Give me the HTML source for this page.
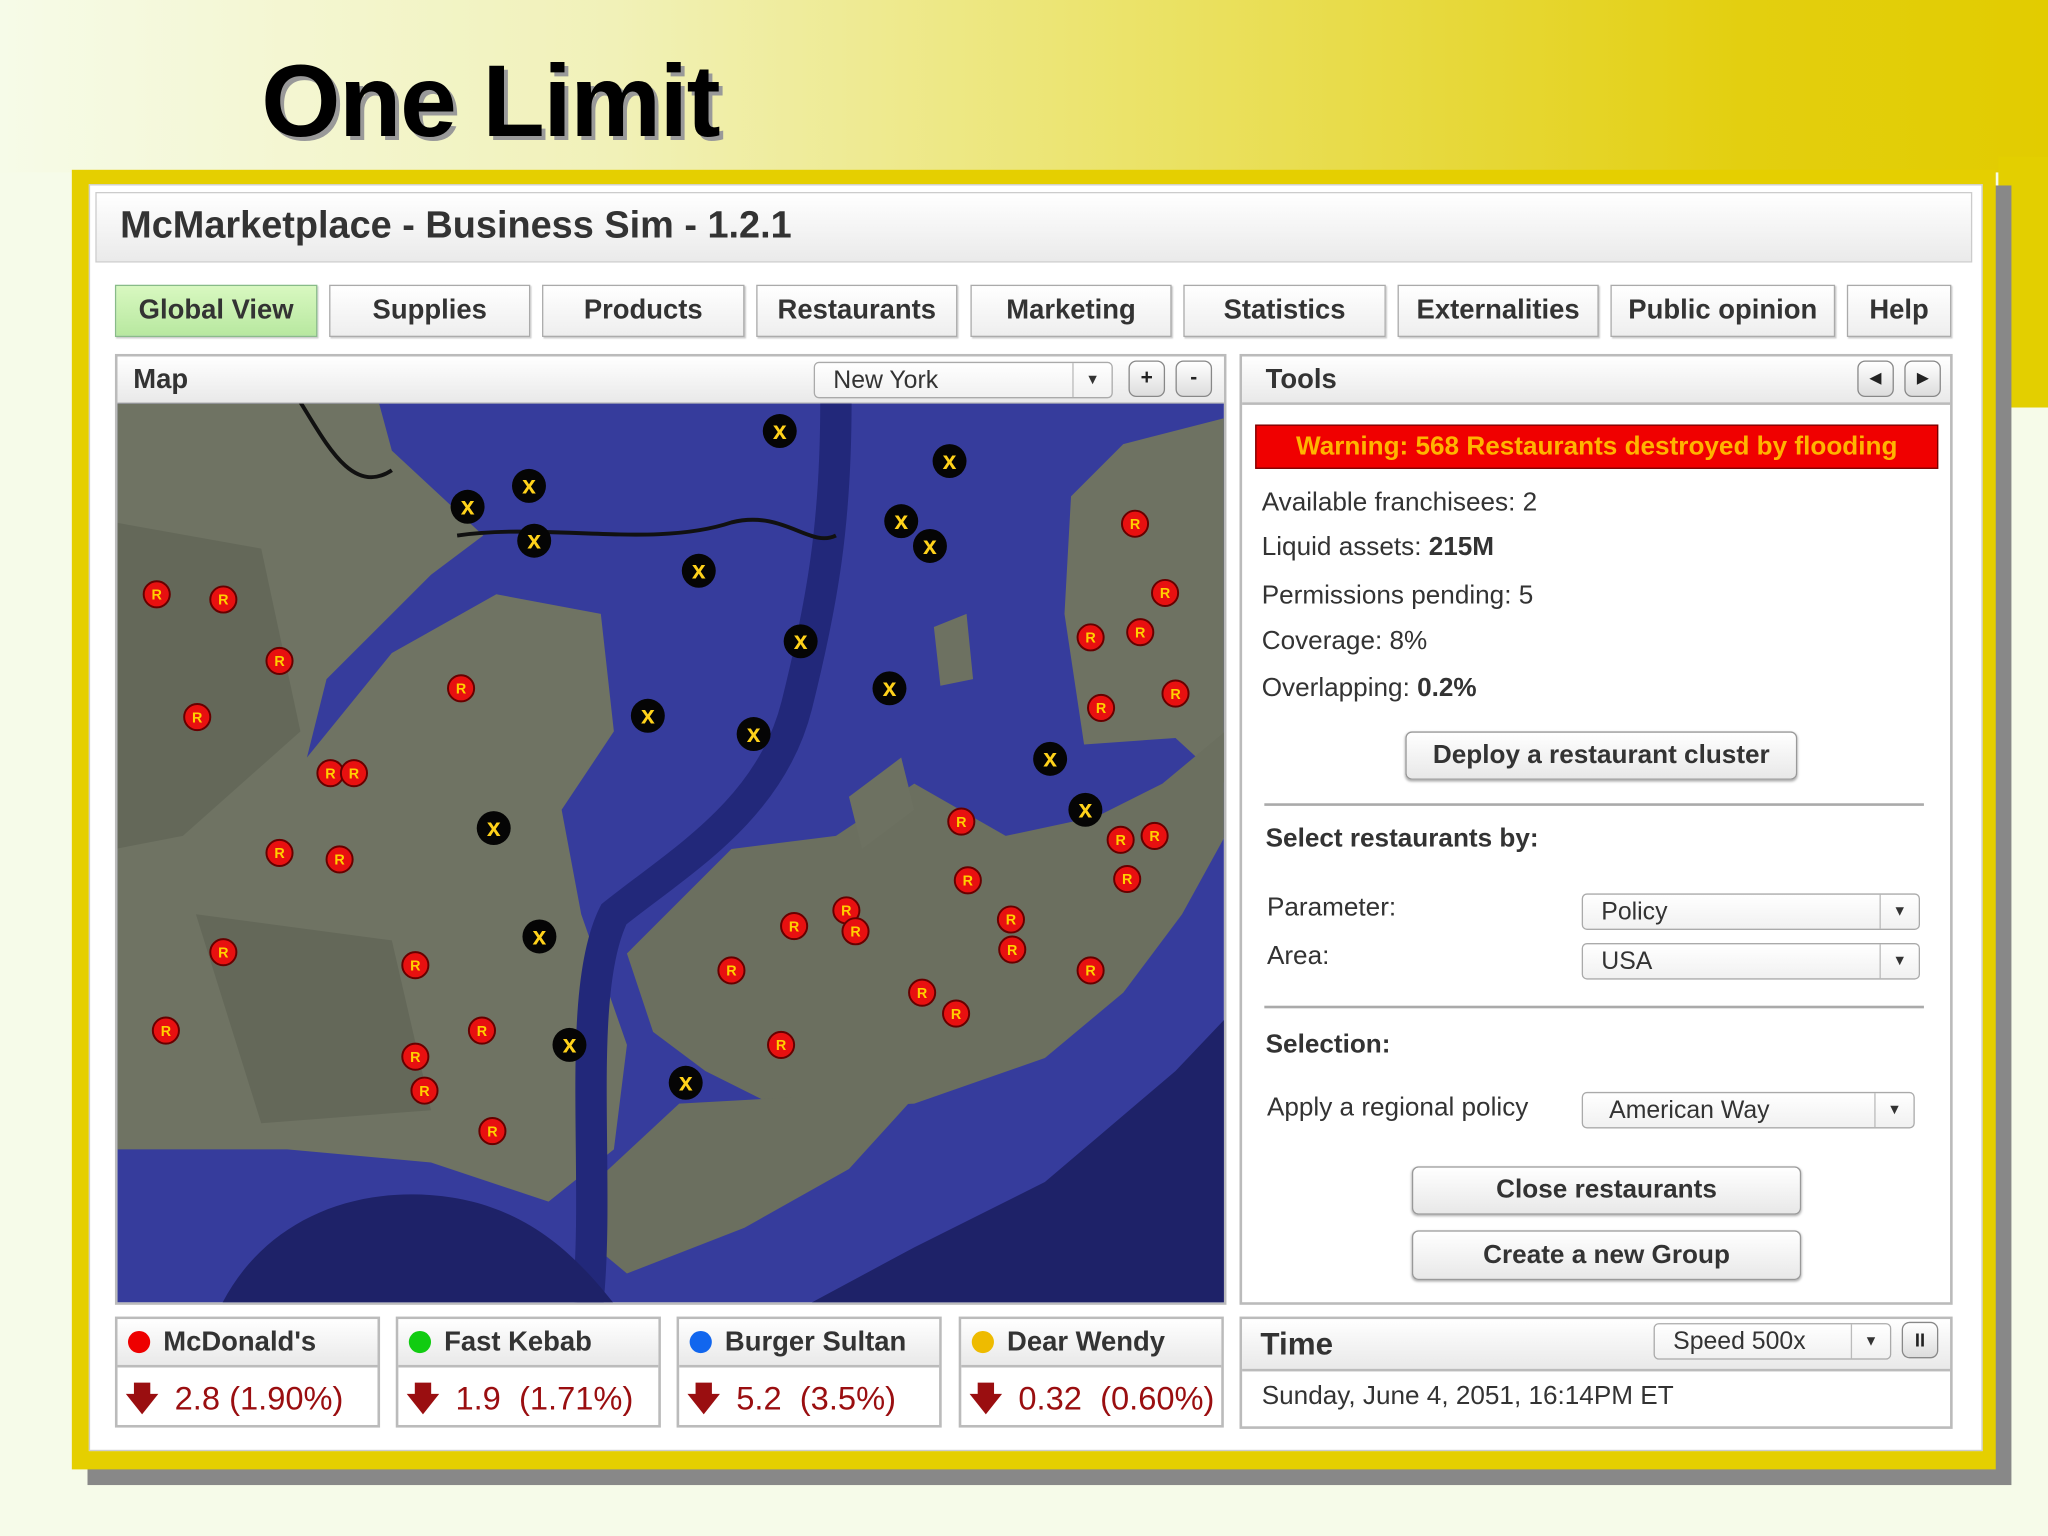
<!DOCTYPE html>
<html><head><meta charset="utf-8"><style>
*{margin:0;padding:0;box-sizing:border-box}
html,body{width:2048px;height:1536px;overflow:hidden;background:#f6fbe9;font-family:"Liberation Sans",Arial,sans-serif}
#root{position:absolute;left:0;top:0;width:1568px;height:1176px;transform:scale(1.306122);transform-origin:0 0}
.a{position:absolute}
.tab{position:absolute;top:218px;height:40px;border:1px solid #aaa;background:linear-gradient(#fff,#eee);font-weight:bold;font-size:21px;color:#333;text-align:center;line-height:38px;box-shadow:1px 1px 1px #ccc}
.panel{position:absolute;border:2px solid #bbb;background:#fff}
.ph{position:absolute;left:0;right:0;top:0;height:37px;background:linear-gradient(#fff,#e9e9e9);border-bottom:2px solid #bbb;font-weight:bold;font-size:21px;color:#333;line-height:36px;padding-left:12px}
.sel{position:absolute;border:1px solid #aaa;border-radius:4px;background:linear-gradient(#fff,#f1f1f1);font-size:19px;color:#333;line-height:28px;padding-left:14px}
.sel .ar{position:absolute;right:0;top:0;bottom:0;width:30px;border-left:1px solid #bbb;text-align:center;font-size:11px;line-height:26px;color:#333}
.btn{position:absolute;border:1px solid #999;border-radius:5px;background:linear-gradient(#fff,#e8e8e8);font-weight:bold;font-size:20px;color:#333;text-align:center;box-shadow:0 1px 2px #aaa}
.sb{position:absolute;border:1px solid #888;border-radius:6px;background:linear-gradient(#fff,#ddd);width:28px;height:28px;text-align:center;font-size:16px;font-weight:bold;line-height:26px;color:#222}
.t{position:absolute;font-size:20px;color:#333;white-space:nowrap}
.stat{position:absolute;top:1008px;height:85px;border:2px solid #bbb;background:#fff}
.stat .h{height:37px;background:linear-gradient(#fff,#e9e9e9);border-bottom:2px solid #bbb;font-weight:bold;font-size:21px;color:#333;line-height:36px;padding-left:8px;white-space:nowrap}
.dot{display:inline-block;width:17px;height:17px;border-radius:50%;vertical-align:-2px;margin-right:10px}
.stat .v{font-size:25px;color:#9a0e10;line-height:48px;padding-left:6px;white-space:nowrap}
.arr{display:inline-block;font-weight:bold;margin-right:12px}
</style></head><body><div id="root">
<div class="a" style="left:0;top:0;width:1568px;height:132px;background:linear-gradient(90deg,#f6fbe8 0%,#f1f1b8 30%,#ebe36a 55%,#e3cf10 85%,#e2cc00 100%)"></div>
<div class="a" style="left:1530px;top:120px;width:38px;height:192px;background:#e3cf00"></div>
<div class="a" style="left:200px;top:32px;font-size:78px;font-weight:bold;color:#000;text-shadow:3px 3px 0 #999;letter-spacing:-1px">One Limit</div>
<div class="a" style="left:67px;top:142px;width:1473px;height:995px;background:#888"></div>
<div class="a" style="left:55px;top:130px;width:1473px;height:995px;background:#e5cf00"></div>
<div class="a" style="left:68px;top:141px;width:1450px;height:970px;background:#fff;border:1px solid #ccc"></div>
<div class="a" style="left:73px;top:147px;width:1437px;height:54px;background:linear-gradient(#fff,#eaeaea);border:1px solid #ccc;font-weight:bold;font-size:29px;color:#333;line-height:50px;padding-left:18px">McMarketplace - Business Sim - 1.2.1</div>
<div class="tab" style="left:88px;width:155px;background:linear-gradient(#d8f8c0,#b8e8a0);border-color:#8b8">Global View</div>
<div class="tab" style="left:252px;width:154px">Supplies</div>
<div class="tab" style="left:415px;width:155px">Products</div>
<div class="tab" style="left:579px;width:154px">Restaurants</div>
<div class="tab" style="left:743px;width:154px">Marketing</div>
<div class="tab" style="left:906px;width:155px">Statistics</div>
<div class="tab" style="left:1070px;width:154px">Externalities</div>
<div class="tab" style="left:1233px;width:172px">Public opinion</div>
<div class="tab" style="left:1414px;width:80px">Help</div>

<div class="panel" style="left:88px;top:271px;width:851px;height:728px">
<div class="ph">Map</div>
</div>
<div class="sel" style="left:623px;top:277px;width:229px;height:28px">New York<div class="ar">▼</div></div>
<div class="sb" style="left:864px;top:276px">+</div>
<div class="sb" style="left:900px;top:276px">-</div>
<svg class="a" style="left:90px;top:309px" width="847" height="688" viewBox="90 309 847 688" preserveAspectRatio="none">
<rect x="88" y="308" width="852" height="692" fill="#363c9c"/>
<path d="M88 308 L290 308 L300 345 L370 410 L330 440 L250 520 L235 580 L300 500 L380 455 L460 470 L470 560 L430 620 L445 700 L480 800 L470 880 L420 920 L330 890 L220 880 L88 880Z" fill="#6f7363"/>
<path d="M88 400 L200 420 L230 560 L140 640 L88 650Z M150 700 L300 720 L330 850 L200 860 Z" fill="#5f6456" opacity=".7"/>
<path d="M820 380 L860 340 L938 320 L938 600 L900 565 L830 570 L815 470Z" fill="#6e7262"/>
<path d="M480 730 L560 650 L640 640 L700 600 L770 640 L840 625 L890 600 L938 560 L938 640 L905 700 L860 760 L800 810 L700 845 L600 850 L540 820 L500 790Z" fill="#6b6f5f"/>
<path d="M450 910 L520 845 L610 840 L700 840 L650 895 L570 940 L480 975 L450 950Z" fill="#6b6f5f"/>
<path d="M650 610 L690 580 L700 620 L660 650Z M715 480 L740 470 L745 520 L720 525Z" fill="#6d7161"/>
<path d="M640 308 C640 400 630 460 610 540 C590 620 520 660 470 700 C440 760 460 900 450 998" stroke="#22287a" stroke-width="24" fill="none"/>
<path d="M620 998 L700 955 L800 905 L900 820 L938 780 L938 998Z" fill="#1e2268"/>
<path d="M170 998 C200 940 260 910 330 915 C400 920 440 960 470 998Z" fill="#1e2268"/>
<path d="M230 308 C250 340 270 380 300 360 M350 410 C420 400 500 420 560 400 C600 390 620 420 640 410" stroke="#111" stroke-width="3" fill="none"/>
<g stroke="#600" stroke-width="1.5">
<g fill="#e81010">
<circle cx="120" cy="455" r="10"/><circle cx="171" cy="459" r="10"/><circle cx="214" cy="506" r="10"/><circle cx="151" cy="549" r="10"/><circle cx="353" cy="527" r="10"/><circle cx="253" cy="592" r="10"/><circle cx="271" cy="592" r="10"/><circle cx="214" cy="653" r="10"/><circle cx="260" cy="658" r="10"/><circle cx="171" cy="729" r="10"/><circle cx="318" cy="739" r="10"/><circle cx="127" cy="789" r="10"/><circle cx="369" cy="789" r="10"/><circle cx="318" cy="809" r="10"/><circle cx="325" cy="835" r="10"/><circle cx="377" cy="866" r="10"/><circle cx="869" cy="401" r="10"/><circle cx="892" cy="454" r="10"/><circle cx="835" cy="488" r="10"/><circle cx="873" cy="484" r="10"/><circle cx="843" cy="542" r="10"/><circle cx="900" cy="531" r="10"/><circle cx="736" cy="629" r="10"/><circle cx="858" cy="643" r="10"/><circle cx="884" cy="640" r="10"/><circle cx="741" cy="674" r="10"/><circle cx="863" cy="673" r="10"/><circle cx="648" cy="697" r="10"/><circle cx="608" cy="709" r="10"/><circle cx="655" cy="713" r="10"/><circle cx="774" cy="704" r="10"/><circle cx="775" cy="727" r="10"/><circle cx="560" cy="743" r="10"/><circle cx="706" cy="760" r="10"/><circle cx="732" cy="776" r="10"/><circle cx="835" cy="743" r="10"/><circle cx="598" cy="800" r="10"/>
</g></g>
<g fill="#ffd000" font-size="11" font-weight="bold" font-family="Liberation Sans" text-anchor="middle">
<text x="120" y="459">R</text><text x="171" y="463">R</text><text x="214" y="510">R</text><text x="151" y="553">R</text><text x="353" y="531">R</text><text x="253" y="596">R</text><text x="271" y="596">R</text><text x="214" y="657">R</text><text x="260" y="662">R</text><text x="171" y="733">R</text><text x="318" y="743">R</text><text x="127" y="793">R</text><text x="369" y="793">R</text><text x="318" y="813">R</text><text x="325" y="839">R</text><text x="377" y="870">R</text><text x="869" y="405">R</text><text x="892" y="458">R</text><text x="835" y="492">R</text><text x="873" y="488">R</text><text x="843" y="546">R</text><text x="900" y="535">R</text><text x="736" y="633">R</text><text x="858" y="647">R</text><text x="884" y="644">R</text><text x="741" y="678">R</text><text x="863" y="677">R</text><text x="648" y="701">R</text><text x="608" y="713">R</text><text x="655" y="717">R</text><text x="774" y="708">R</text><text x="775" y="731">R</text><text x="560" y="747">R</text><text x="706" y="764">R</text><text x="732" y="780">R</text><text x="835" y="747">R</text><text x="598" y="804">R</text>
</g>
<g fill="#050505">
<circle cx="597" cy="330" r="13"/><circle cx="727" cy="353" r="13"/><circle cx="405" cy="372" r="13"/><circle cx="358" cy="388" r="13"/><circle cx="409" cy="414" r="13"/><circle cx="690" cy="399" r="13"/><circle cx="712" cy="418" r="13"/><circle cx="535" cy="437" r="13"/><circle cx="613" cy="491" r="13"/><circle cx="681" cy="527" r="13"/><circle cx="496" cy="548" r="13"/><circle cx="577" cy="562" r="13"/><circle cx="804" cy="581" r="13"/><circle cx="831" cy="620" r="13"/><circle cx="378" cy="634" r="13"/><circle cx="413" cy="717" r="13"/><circle cx="436" cy="800" r="13"/><circle cx="525" cy="829" r="13"/>
</g>
<g fill="#ffd21a" font-size="19" font-weight="bold" font-family="Liberation Sans" text-anchor="middle">
<text x="597" y="336">x</text><text x="727" y="359">x</text><text x="405" y="378">x</text><text x="358" y="394">x</text><text x="409" y="420">x</text><text x="690" y="405">x</text><text x="712" y="424">x</text><text x="535" y="443">x</text><text x="613" y="497">x</text><text x="681" y="533">x</text><text x="496" y="554">x</text><text x="577" y="568">x</text><text x="804" y="587">x</text><text x="831" y="626">x</text><text x="378" y="640">x</text><text x="413" y="723">x</text><text x="436" y="806">x</text><text x="525" y="835">x</text>
</g>
</svg>

<div class="panel" style="left:949px;top:271px;width:546px;height:728px">
<div class="ph" style="padding-left:18px">Tools</div>
</div>
<div class="sb" style="left:1422px;top:276px;font-size:11px">◀</div>
<div class="sb" style="left:1458px;top:276px;font-size:11px">▶</div>
<div class="a" style="left:961px;top:325px;width:523px;height:34px;background:#f00000;border:1px solid #700;color:#ffb400;font-weight:bold;font-size:20px;line-height:32px;text-align:center;white-space:nowrap">Warning: 568 Restaurants destroyed by flooding</div>
<div class="t" style="left:966px;top:374px">Available franchisees: 2</div>
<div class="t" style="left:966px;top:408px">Liquid assets: <b>215M</b></div>
<div class="t" style="left:966px;top:445px">Permissions pending: 5</div>
<div class="t" style="left:966px;top:480px">Coverage: 8%</div>
<div class="t" style="left:966px;top:516px">Overlapping: <b>0.2%</b></div>
<div class="btn" style="left:1076px;top:560px;width:300px;height:37px;line-height:35px">Deploy a restaurant cluster</div>
<div class="a" style="left:968px;top:615px;width:505px;height:2px;background:#aaa"></div>
<div class="t" style="left:969px;top:631px;font-weight:bold">Select restaurants by:</div>
<div class="t" style="left:970px;top:684px">Parameter:</div>
<div class="sel" style="left:1211px;top:684px;width:259px;height:28px">Policy<div class="ar">▼</div></div>
<div class="t" style="left:970px;top:721px">Area:</div>
<div class="sel" style="left:1211px;top:722px;width:259px;height:28px">USA<div class="ar">▼</div></div>
<div class="a" style="left:968px;top:770px;width:505px;height:2px;background:#aaa"></div>
<div class="t" style="left:969px;top:789px;font-weight:bold">Selection:</div>
<div class="t" style="left:970px;top:837px">Apply a regional policy</div>
<div class="sel" style="left:1211px;top:836px;width:255px;height:28px;padding-left:20px">American Way<div class="ar">▼</div></div>
<div class="btn" style="left:1081px;top:893px;width:298px;height:37px;line-height:35px">Close restaurants</div>
<div class="btn" style="left:1081px;top:942px;width:298px;height:38px;line-height:36px">Create a new Group</div>

<div class="stat" style="left:88px;width:203px"><div class="h"><span class="dot" style="background:#e00"></span>McDonald's</div><div class="v"><span class="arr">🡇</span>2.8 (1.90%)</div></div>
<div class="stat" style="left:303px;width:203px"><div class="h"><span class="dot" style="background:#1c1"></span>Fast Kebab</div><div class="v"><span class="arr">🡇</span>1.9 &nbsp;(1.71%)</div></div>
<div class="stat" style="left:518px;width:203px"><div class="h"><span class="dot" style="background:#16e"></span>Burger Sultan</div><div class="v"><span class="arr">🡇</span>5.2 &nbsp;(3.5%)</div></div>
<div class="stat" style="left:734px;width:203px"><div class="h"><span class="dot" style="background:#eb0"></span>Dear Wendy</div><div class="v"><span class="arr">🡇</span>0.32 &nbsp;(0.60%)</div></div>

<div class="panel" style="left:949px;top:1008px;width:546px;height:86px">
<div class="ph" style="height:40px;font-size:24px;line-height:40px;padding-left:14px">Time</div>
<div class="t" style="left:15px;top:48px">Sunday, June 4, 2051, 16:14PM ET</div>
</div>
<div class="sel" style="left:1266px;top:1013px;width:182px;height:28px">Speed 500x<div class="ar">▼</div></div>
<div class="sb" style="left:1456px;top:1012px;font-size:14px">II</div>
</div></body></html>
